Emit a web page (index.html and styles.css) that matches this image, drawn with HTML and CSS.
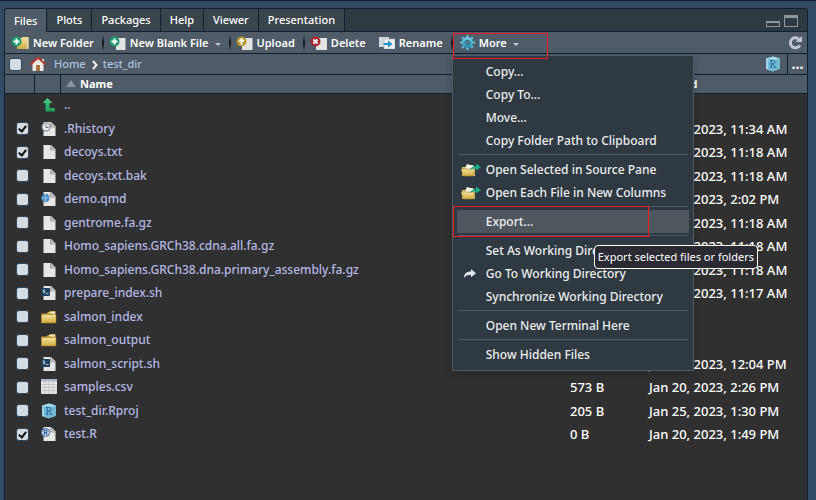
FILE: index.html
```html
<!DOCTYPE html>
<html lang="en">
<head>
<meta charset="utf-8">
<title>Files</title>
<link rel="stylesheet" href="styles.css">
</head>
<body>
<svg class="sprite" aria-hidden="true">
  <defs>
    <linearGradient id="gold" x1="0" y1="0" x2="0" y2="1"><stop offset="0" stop-color="#f3e3a0"/><stop offset="1" stop-color="#d2ab3f"/></linearGradient>
    <linearGradient id="teal" x1="0" y1="0" x2="0" y2="1"><stop offset="0" stop-color="#7fd0e4"/><stop offset="1" stop-color="#238fb4"/></linearGradient>
    <linearGradient id="green" x1="0" y1="0" x2="0" y2="1"><stop offset="0" stop-color="#4fd08c"/><stop offset="1" stop-color="#1f9a5c"/></linearGradient>
  </defs>
  <symbol id="doc" viewBox="0 0 16 16"><path d="M2.500 1H10l4.500 4.500V15h-12z" fill="#e6e6e4"/><path d="M10 1l4.500 4.500H10z" fill="#b9b9b7"/><path d="M9.500 1v5h5" fill="none" stroke="#8b8b89" stroke-width=".7"/></symbol>
  <symbol id="history" viewBox="0 0 16 16"><use href="#doc"/><circle cx="5" cy="6" r="4" fill="#e9ecef" stroke="#7d8894" stroke-width="1.200"/><path d="M5 3.500V6.500h2.500" fill="none" stroke="#5c6873"/></symbol>
  <symbol id="qmd" viewBox="0 0 16 16"><use href="#doc"/><circle cx="4.500" cy="7" r="4.200" fill="#4a8ac4"/><path d="M.5 7h8M4.500 3v8" stroke="#a9cbe6" stroke-width=".8"/></symbol>
  <symbol id="shell" viewBox="0 0 16 16"><use href="#doc"/><rect x=".5" y="3" width="8.500" height="8" rx="1" fill="#1e4160"/><path d="M4 5H2.200v1.300H3.800v1.400H2M5 8.500h2.500" fill="none" stroke="#dde6ee" stroke-width=".8"/></symbol>
  <symbol id="rfile" viewBox="0 0 16 16"><use href="#doc"/><circle cx="4.500" cy="6.500" r="4" fill="#dfe8f1" stroke="#345f95"/><path d="M3.300 9V4.200h1.500a1.200 1.200 0 0 1 0 2.500H3.500M4.700 6.700L6.300 9" fill="none" stroke="#2d62a3" stroke-width="1.200"/></symbol>
  <symbol id="folder" viewBox="0 0 16 16"><path d="M.5 14V4.500h5L7 3h1l1-1h5.500V13.500z" fill="#c8a13a"/><path d="M8.500 4V2.700H14V5z" fill="#efebd8"/><path d="M.5 5.500h14.500V14H.5z" fill="url(#gold)" stroke="#a67e22" stroke-width=".6"/></symbol>
  <symbol id="csv" viewBox="0 0 16 16"><rect y="1" width="16" height="14" rx="1" fill="#e5e5e6"/><rect y="0" width="16" height="2.500" fill="#aeb6cc"/><path d="M0 5.500h16M0 8.500h16M0 11.500h16M4 2v13M8 2v13M12 2v13" stroke="#bcbcbe" stroke-width=".7"/></symbol>
  <symbol id="rproj" viewBox="0 0 16 16"><path d="M8 .5l7 2V13l-7 2.500L1 13V2.500z" fill="#72b8d2"/><path d="M8 .5l7 2-7 2-7-2z" fill="#a4d9e8"/><path d="M8 15.500L1 13V2.500l2 .7v9.600z" fill="#a0d3e4"/><path d="M6.200 11.500V4.300h1.900a1.800 1.800 0 0 1 0 3.700H6.200M8.200 8l1.900 3.400M5 4.300H7M5 11.300h2.400M9.300 11.300h1.900" fill="none" stroke="#2467a0"/></symbol>
  <symbol id="up" viewBox="0 0 14 14"><path d="M5.500 0l5 5H7.500v5H13v3.500H3.500V5H.5z" fill="url(#green)"/></symbol>
  <symbol id="home" viewBox="0 0 16 14"><path d="M2.500 6.500L8 1.500l5.500 5V14h-11z" fill="#eeeae5"/><path d="M12 2h2v3h-2z" fill="#d8d2ce"/><path d="M.5 7.500L8 .8l7.500 6.700" fill="none" stroke="#c43227" stroke-width="1.800"/><path d="M6 8h4v6H6z" fill="#a97545"/></symbol>
  <symbol id="newfolder" viewBox="0 0 18 14"><path d="M7 2h3l2-1h5.500v12H6z" fill="url(#gold)"/><path d="M15.500 2v11h2V2z" fill="#ded6ae"/><circle cx="5.500" cy="5.500" r="5" fill="#159a6b"/><path d="M5.500 2.500v6M2.500 5.500h6" stroke="#fff" stroke-width="2"/></symbol>
  <symbol id="newfile" viewBox="0 0 17 14"><path d="M7 2h9.500v12H7z" fill="#e3e3e2"/><circle cx="5.500" cy="5.500" r="5" fill="#159a6b"/><path d="M5.500 2.500v6M2.500 5.500h6" stroke="#fff" stroke-width="2"/></symbol>
  <symbol id="upload" viewBox="0 0 17 14"><path d="M6 2h10.500v12H6z" fill="#e3e3e2"/><circle cx="5.500" cy="5.500" r="5" fill="#b5962e"/><path d="M5.500 9V4M3 5.500L5.500 3 8 5.500" fill="none" stroke="#fff" stroke-width="1.700"/></symbol>
  <symbol id="delete" viewBox="0 0 17 14"><path d="M6 2h11v12H6z" fill="#e3e3e2"/><circle cx="5.500" cy="5.500" r="5" fill="#a8272c"/><path d="M3.500 3.500l4 4M7.500 3.500l-4 4" stroke="#fff" stroke-width="2"/></symbol>
  <symbol id="rename" viewBox="0 0 16 13"><path d="M0 1h10v10H0z" fill="#d3d7d9"/><path d="M5 3h11v10H5z" fill="#eef0f1" stroke="#b4bbc0" stroke-width=".6"/><path d="M4.500 7h4.500V4.500L13.500 8 9 11.500V9H4.500z" fill="#1796c9"/></symbol>
  <symbol id="gear" viewBox="0 0 16 16"><path d="M8 0v16M0 8h16M2.300 2.300l11.400 11.400M13.700 2.300L2.300 13.700" stroke="#58b4d0" stroke-width="2.800"/><circle cx="8" cy="8" r="5.800" fill="url(#teal)"/><circle cx="8" cy="8" r="3" fill="#2f7c9a"/><circle cx="8" cy="8" r="1.800" fill="#60717c"/></symbol>
  <symbol id="refresh" viewBox="0 0 14 14"><path d="M11.800 9.200A5 5 0 1 1 11 3.400" fill="none" stroke="#bfc6d3" stroke-width="3"/><path d="M14 0v6H7.500z" fill="#bfc6d3"/></symbol>
  <symbol id="openfolder" viewBox="0 0 20 14"><path d="M1 13V4h3l2-2h6l2 3v8z" fill="#d9bd61"/><path d="M4 6l2-5 7 2v5H4z" fill="#f4f3e8"/><path d="M0 6h11l2 1h1l-2 6H2.500z" fill="url(#gold)" stroke="#a5842f" stroke-width=".6"/><path d="M9 7c1-3 3-4 6-4V.5L20 4l-5 3.500V5.500c-2 0-4 0-6 1.500z" fill="#18ad83"/></symbol>
  <symbol id="goto" viewBox="0 0 12 10"><path d="M0 9C0 4 3 2.500 7 2.500V0l5 4.200-5 4V6C4 6 2 6 0 9z" fill="#dfe5ea"/></symbol>
</svg>

<main class="pane">
  <nav class="tabs" aria-label="Panes">
    <button class="tab active">Files</button><button class="tab">Plots</button><button class="tab">Packages</button><button class="tab">Help</button><button class="tab">Viewer</button><button class="tab">Presentation</button>
    <div class="window-buttons">
      <button class="minimize" aria-label="Minimize"></button>
      <button class="maximize" aria-label="Maximize"></button>
    </div>
  </nav>

  <div class="toolbar">
    <button class="tool"><svg class="i18"><use href="#newfolder"/></svg>New Folder</button>
    <span class="divider"></span>
    <button class="tool"><svg class="i17"><use href="#newfile"/></svg>New Blank File<i class="caret"></i></button>
    <span class="divider"></span>
    <button class="tool"><svg class="i17"><use href="#upload"/></svg>Upload</button>
    <span class="divider"></span>
    <button class="tool"><svg class="i17"><use href="#delete"/></svg>Delete</button>
    <button class="tool rename"><svg class="i16"><use href="#rename"/></svg>Rename</button>
    <span class="divider"></span>
    <div class="more">
      <button class="tool"><svg class="gear"><use href="#gear"/></svg>More<i class="caret"></i></button>
      <div class="mark mark-more"></div>
      <div class="menu" role="menu">
        <button class="item">Copy...</button>
        <button class="item">Copy To...</button>
        <button class="item">Move...</button>
        <button class="item">Copy Folder Path to Clipboard</button>
        <hr>
        <button class="item"><svg class="i20"><use href="#openfolder"/></svg>Open Selected in Source Pane</button>
        <button class="item"><svg class="i20"><use href="#openfolder"/></svg>Open Each File in New Columns</button>
        <hr>
        <div class="export">
          <button class="item selected">Export...</button>
          <div class="mark mark-export"></div>
          <div class="tooltip" role="tooltip">Export selected files or folders</div>
        </div>
        <hr>
        <button class="item">Set As Working Directory</button>
        <button class="item"><svg class="goto"><use href="#goto"/></svg>Go To Working Directory</button>
        <button class="item">Synchronize Working Directory</button>
        <hr>
        <button class="item">Open New Terminal Here</button>
        <hr>
        <button class="item">Show Hidden Files</button>
      </div>
    </div>
    <button class="tool refresh" aria-label="Refresh"><svg><use href="#refresh"/></svg></button>
  </div>

  <div class="path">
    <input type="checkbox" aria-label="Select all">
    <svg class="home"><use href="#home"/></svg>
    <a href="#">Home</a>
    <svg class="chevron" viewBox="0 0 6 10"><path d="M1 1l3.500 4L1 9" fill="none" stroke="#f1f4f6" stroke-width="2"/></svg>
    <a href="#">test_dir</a>
    <svg class="project"><use href="#rproj"/></svg>
    <button class="browse" aria-label="Browse">...</button>
  </div>

  <table class="files">
    <colgroup><col class="c-check"><col class="c-icon"><col><col class="c-size"><col class="c-date"></colgroup>
    <thead><tr><th></th><th></th><th><i class="sort"></i>Name</th><th></th><th class="modified">Modified</th></tr></thead>
    <tbody>
      <tr><td></td><td><svg class="up"><use href="#up"/></svg></td><td><a href="#">..</a></td><td></td><td></td></tr>
      <tr><td><input type="checkbox" aria-label=".Rhistory" checked></td><td><svg><use href="#history"/></svg></td><td><a href="#">.Rhistory</a></td><td></td><td>Jan 20, 2023, 11:34 AM</td></tr>
      <tr><td><input type="checkbox" aria-label="decoys.txt" checked></td><td><svg><use href="#doc"/></svg></td><td><a href="#">decoys.txt</a></td><td></td><td>Jan 20, 2023, 11:18 AM</td></tr>
      <tr><td><input type="checkbox" aria-label="decoys.txt.bak"></td><td><svg><use href="#doc"/></svg></td><td><a href="#">decoys.txt.bak</a></td><td></td><td>Jan 20, 2023, 11:18 AM</td></tr>
      <tr><td><input type="checkbox" aria-label="demo.qmd"></td><td><svg><use href="#qmd"/></svg></td><td><a href="#">demo.qmd</a></td><td></td><td>Jan 20, 2023, 2:02 PM</td></tr>
      <tr><td><input type="checkbox" aria-label="gentrome.fa.gz"></td><td><svg><use href="#doc"/></svg></td><td><a href="#">gentrome.fa.gz</a></td><td></td><td>Jan 20, 2023, 11:18 AM</td></tr>
      <tr><td><input type="checkbox" aria-label="Homo_sapiens.GRCh38.cdna.all.fa.gz"></td><td><svg><use href="#doc"/></svg></td><td><a href="#">Homo_sapiens.GRCh38.cdna.all.fa.gz</a></td><td></td><td>Jan 20, 2023, 11:18 AM</td></tr>
      <tr><td><input type="checkbox" aria-label="Homo_sapiens.GRCh38.dna.primary_assembly.fa.gz"></td><td><svg><use href="#doc"/></svg></td><td><a href="#">Homo_sapiens.GRCh38.dna.primary_assembly.fa.gz</a></td><td></td><td>Jan 20, 2023, 11:18 AM</td></tr>
      <tr><td><input type="checkbox" aria-label="prepare_index.sh"></td><td><svg><use href="#shell"/></svg></td><td><a href="#">prepare_index.sh</a></td><td></td><td>Jan 20, 2023, 11:17 AM</td></tr>
      <tr><td><input type="checkbox" aria-label="salmon_index"></td><td><svg><use href="#folder"/></svg></td><td><a href="#">salmon_index</a></td><td></td><td></td></tr>
      <tr><td><input type="checkbox" aria-label="salmon_output"></td><td><svg><use href="#folder"/></svg></td><td><a href="#">salmon_output</a></td><td></td><td></td></tr>
      <tr><td><input type="checkbox" aria-label="salmon_script.sh"></td><td><svg><use href="#shell"/></svg></td><td><a href="#">salmon_script.sh</a></td><td></td><td>Jan 20, 2023, 12:04 PM</td></tr>
      <tr><td><input type="checkbox" aria-label="samples.csv"></td><td><svg><use href="#csv"/></svg></td><td><a href="#">samples.csv</a></td><td>573 B</td><td>Jan 20, 2023, 2:26 PM</td></tr>
      <tr><td><input type="checkbox" aria-label="test_dir.Rproj"></td><td><svg><use href="#rproj"/></svg></td><td><a href="#">test_dir.Rproj</a></td><td>205 B</td><td>Jan 25, 2023, 1:30 PM</td></tr>
      <tr><td><input type="checkbox" aria-label="test.R" checked></td><td><svg><use href="#rfile"/></svg></td><td><a href="#">test.R</a></td><td>0 B</td><td>Jan 20, 2023, 1:49 PM</td></tr>
    </tbody>
  </table>
</main>
</body>
</html>
```
FILE: styles.css
```css
* { box-sizing: border-box; }
:root {
  --line: #10202f;
  --bar: #4f5b66;
  --dark: #2f3941;
}
body {
  margin: 0;
  min-height: 100vh;
  display: flex;
  border-top: 1px solid var(--line);
  padding: 7px 8px 0 4px;
  background: #324b65;
  color: #fff;
  font: 500 12px/16px "Noto Sans", "Open Sans", sans-serif;
}
button {
  margin: 0;
  border: 0;
  padding: 0;
  background: none;
  color: inherit;
  font: inherit;
}
a { color: #b5b8e6; text-decoration: none; }
svg { display: block; flex: none; }
.sprite { position: absolute; width: 0; height: 0; }

.pane {
  flex: 1;
  min-width: 0;
  border: 1px solid var(--line);
  border-bottom: 0;
  border-radius: 3px 3px 0 0;
  background: #303030;
}

.tabs { display: flex; height: 23px; border-bottom: 1px solid var(--line); background: var(--dark); font-size: 11px; font-weight: 500; }
.tab { padding: 0 9px; border-right: 1px solid var(--line); background: #3a444d; }
.tab.active { margin-bottom: -1px; background: var(--bar); border-radius: 3px 0 0 0; }
.window-buttons { display: flex; gap: 4px; align-items: flex-end; margin-left: auto; padding: 0 9px 4px 0; }
.minimize, .maximize { width: 14px; border: 1px solid #8d969b; border-top-width: 2px; }
.minimize { height: 6px; }
.maximize { height: 12px; border-top-width: 3px; }

.toolbar { display: flex; align-items: center; height: 22px; border-bottom: 1px solid var(--line); padding: 0 5px 0 6px; background: var(--bar); font-size: 11px; font-weight: 600; }
.tool { display: flex; align-items: center; gap: 4px; white-space: nowrap; }
.divider { width: 2px; height: 16px; margin: 0 5px 0 8px; background: linear-gradient(#4f5b66, #0b1117, #4f5b66); }
.rename { margin-left: 13px; }
.i20 { width: 20px; height: 14px; }
.i18 { width: 18px; height: 14px; }
.i17 { width: 17px; height: 14px; }
.i16 { width: 16px; height: 13px; }
.gear { width: 15px; height: 15px; }
.caret { margin: 3px 0 0 2px; border: 3px solid transparent; border-top-color: #c2c9cf; border-bottom: 0; }
.refresh { margin-left: auto; }
.refresh svg { width: 14px; height: 14px; }
.more { position: relative; align-self: stretch; display: flex; padding: 0 6px 0 2px; }

.mark { position: absolute; z-index: 2; border: 1px solid #f01820; pointer-events: none; }
.mark-more { inset: 1px -23px -6px -5px; }
.mark-export { inset: -4px 40px -4px -4px; }

.menu {
  position: absolute;
  z-index: 1;
  top: 100%;
  left: -6px;
  width: 242px;
  margin-top: 2px;
  border: 1px solid #4e5c68;
  padding: 4px;
  background: var(--dark);
  box-shadow: 0 2px 8px rgba(0, 0, 0, .2);
  font-size: 12px;
  font-weight: 500;
  color: #eceef0;
}
.item { display: flex; align-items: center; position: relative; width: 100%; height: 23px; padding-left: 29px; white-space: nowrap; }
.item svg { position: absolute; left: 4px; }
.item .goto { left: 7px; width: 12px; height: 10px; }
.selected { background: #4f565d; }
.menu hr { margin: 2px 1px 3px; border: 0; height: 1px; background: #4e5c68; }
.export { position: relative; }
.tooltip {
  position: absolute;
  z-index: 3;
  top: 35px;
  left: 137px;
  border: 1px solid #fff;
  border-radius: 4px;
  padding: 2px 3px;
  background: #2b2a33;
  color: #fff;
  font: 11px/18px "Noto Sans", "Open Sans", sans-serif;
  white-space: nowrap;
}

input[type="checkbox"] {
  appearance: none;
  position: relative;
  display: block;
  flex: none;
  width: 13px;
  height: 13px;
  margin: 0;
  border: 1px solid #31475b;
  border-radius: 3px;
  background: #d5dce1;
}
input:checked::before {
  content: "";
  box-sizing: border-box;
  position: absolute;
  left: 3px;
  top: 1px;
  width: 5px;
  height: 8px;
  border: solid #111;
  border-width: 0 2px 2px 0;
  transform: rotate(38deg);
}

.path { display: flex; align-items: center; height: 21px; border-bottom: 1px solid var(--line); padding-left: 4px; background: var(--bar); font-size: 11px; }
.path a { color: #acc3e0; }
.home { width: 16px; height: 14px; margin: 0 8px; }
.chevron { width: 6px; height: 10px; margin: 2px 5px 0 6px; }
.project { width: 16px; height: 16px; margin: 0 6px 0 auto; }
.browse { align-self: stretch; width: 20px; border-left: 1px solid var(--line); font-size: 14px; font-weight: 700; }

.files { width: 100%; border-collapse: separate; border-spacing: 0; table-layout: fixed; }
.c-check { width: 30px; }
.c-icon { width: 26px; }
.c-size { width: 79px; }
.c-date { width: 162px; }
th { height: 19px; padding: 0; border-bottom: 1px solid var(--line); background: var(--bar); text-align: left; font-size: 11px; font-weight: 700; line-height: 16px; }
th:nth-child(-n+2) { border-right: 1px solid var(--line); }
.modified { padding-left: 4px; }
.sort { display: inline-block; margin: 0 4px 1px 5px; border: 5px solid transparent; border-bottom: 7px solid #89939e; border-top: 0; }
td { height: 23px; padding: 0 0 2px 3px; white-space: nowrap; }
tr:nth-child(odd) td { height: 24px; }
td:first-child { padding-left: 11px; }
td:nth-child(2) { padding-left: 6px; }
td:nth-child(n+4) { padding-left: 4px; font-size: 13px; }
td svg { width: 16px; height: 16px; }
td .up { width: 14px; height: 14px; margin-left: 1px; }
```
